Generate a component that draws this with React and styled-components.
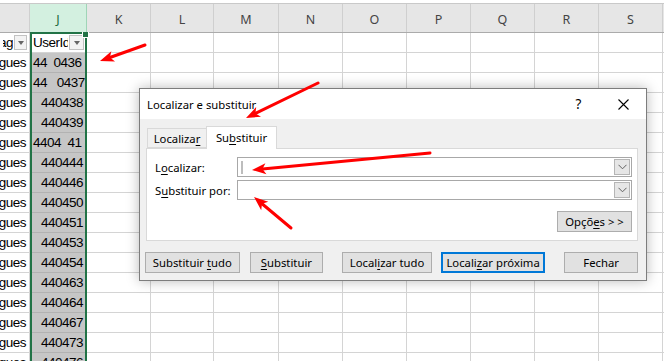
import React from 'react'
import styled, { createGlobalStyle } from 'styled-components'

const GlobalStyle = createGlobalStyle`
    html, body {
        margin: 0;
        padding: 0;
        background: #ffffff;
        overflow: hidden;
    }
`

const UI_FONT = `"Segoe UI", "Noto Sans", "Open Sans", sans-serif`
const CELL_FONT = `"Liberation Sans", Arial, sans-serif`

const columns = [
    { key: 'I', width: 30 },
    { key: 'J', width: 57 },
    { key: 'K', width: 64 },
    { key: 'L', width: 63 },
    { key: 'M', width: 65 },
    { key: 'N', width: 64 },
    { key: 'O', width: 64 },
    { key: 'P', width: 64 },
    { key: 'Q', width: 64 },
    { key: 'R', width: 64 },
    { key: 'S', width: 64 },
    { key: 'T', width: 64 },
]

const userIds = [
    { text: '44  0436', align: 'left' },
    { text: '44   0437', align: 'left' },
    { text: '440438' },
    { text: '440439' },
    { text: '4404  41', align: 'left' },
    { text: '440444' },
    { text: '440446' },
    { text: '440450' },
    { text: '440451' },
    { text: '440453' },
    { text: '440454' },
    { text: '440463' },
    { text: '440464' },
    { text: '440467' },
    { text: '440473' },
    { text: '440476' },
]

const Sheet = styled.div`
    position: relative;
    width: 664px;
    height: 361px;
    overflow: hidden;
    background: #ffffff;
`
const TopStrip = styled.div`
    height: 3px;
    background: #ffffff;
    border-bottom: 1px solid #c9c9c9;
`
const HeaderRow = styled.div`
    display: flex;
    height: 29px;
    box-sizing: border-box;
    background: #e6e6e6;
    border-bottom: 1px solid #ababab;
`
const ColHeader = styled.div`
    flex: 0 0 ${(p) => p.$width}px;
    box-sizing: border-box;
    display: flex;
    align-items: center;
    justify-content: center;
    padding-top: 3px;
    border-right: 1px solid ${(p) => (p.$selected ? '#9fd5b7' : '#cfcfcf')};
    background: ${(p) => (p.$selected ? '#d3f0e0' : 'transparent')};
    color: ${(p) => (p.$selected ? '#1e6b41' : '#444444')};
    font-family: ${UI_FONT};
    font-size: 12.5px;
`
const Row = styled.div`
    display: flex;
    height: 20px;
`
const Cell = styled.div`
    flex: 0 0 ${(p) => p.$width}px;
    box-sizing: border-box;
    display: flex;
    align-items: flex-end;
    justify-content: ${(p) => (p.$align === 'left' ? 'flex-start' : 'flex-end')};
    overflow: hidden;
    padding: 0 3px 3px 3px;
    white-space: pre;
    border-right: 1px solid ${(p) => (p.$shaded ? '#b8b8b8' : '#d4d4d4')};
    border-bottom: 1px solid ${(p) => (p.$shaded ? '#b2b2b2' : '#d4d4d4')};
    background: ${(p) => (p.$shaded ? '#c6c6c6' : '#ffffff')};
    color: #000000;
    font-family: ${CELL_FONT};
    font-size: 13.5px;
    letter-spacing: -0.5px;
    line-height: 13px;
`
const HeadCell = styled(Cell)`
    padding: 0 2px 2px 3px;
`
const HeadLabel = styled.span`
    flex: 1 1 auto;
    overflow: hidden;
    text-align: ${(p) => (p.$align === 'right' ? 'right' : 'left')};
    direction: ${(p) => (p.$align === 'right' ? 'rtl' : 'ltr')};
    padding-bottom: 1px;
`
const FilterButton = styled.span`
    flex: 0 0 auto;
    width: ${(p) => p.$width || 15}px;
    height: 15px;
    box-sizing: border-box;
    margin-left: 1px;
    border: 1px solid #c2c2c2;
    background: #f3f3f3;
    display: flex;
    align-items: center;
    justify-content: center;
`
const FilterCaret = styled.span`
    width: 0;
    height: 0;
    border-left: 3.5px solid transparent;
    border-right: 3.5px solid transparent;
    border-top: 4px solid #666666;
`
const Selection = styled.div`
    position: absolute;
    left: 30px;
    top: 32px;
    width: 57px;
    height: 340px;
    box-sizing: border-box;
    border: 2px solid #217346;
    pointer-events: none;
    z-index: 2;
`
const FillHandle = styled.div`
    position: absolute;
    right: -4px;
    top: -2px;
    width: 5px;
    height: 5px;
    background: #217346;
    border: 1px solid #ffffff;
    border-top: none;
`

/* ---- dialog ---- */
const Dialog = styled.div`
    position: absolute;
    left: 139px;
    top: 88px;
    width: 508px;
    height: 193px;
    box-sizing: border-box;
    border: 1px solid #7d7d7d;
    background: #f0f0f0;
    box-shadow: 0 0 12px rgba(0, 0, 0, 0.28);
    font-family: ${UI_FONT};
    font-size: 11.3px;
    color: #000000;
    z-index: 5;
    display: flex;
    flex-direction: column;
`
const TitleBar = styled.div`
    height: 30px;
    flex: 0 0 30px;
    background: #ffffff;
    display: flex;
    align-items: center;
    padding-left: 7px;
`
const Title = styled.span`
    flex: 1 1 auto;
`
const TitleIcon = styled.span`
    width: 45px;
    height: 30px;
    display: flex;
    align-items: center;
    justify-content: center;
    font-size: 13.5px;
`
const Body = styled.div`
    flex: 1 1 auto;
    padding: 7px 8px 0 6px;
    display: flex;
    flex-direction: column;
`
const TabBar = styled.div`
    display: flex;
    align-items: flex-end;
    height: 22px;
    padding-left: 1px;
`
const Tab = styled.div`
    box-sizing: border-box;
    height: ${(p) => (p.$active ? 23 : 20)}px;
    width: ${(p) => p.$width}px;
    margin-bottom: ${(p) => (p.$active ? -1 : 0)}px;
    line-height: ${(p) => (p.$active ? 21 : 19)}px;
    text-align: center;
    background: ${(p) => (p.$active ? '#ffffff' : '#f0f0f0')};
    border: 1px solid #d9d9d9;
    border-bottom: ${(p) => (p.$active ? 'none' : '1px solid #d9d9d9')};
    border-right: ${(p) => (p.$active ? '1px solid #d9d9d9' : 'none')};
    position: relative;
    z-index: ${(p) => (p.$active ? 1 : 0)};
`
const Panel = styled.div`
    height: 93px;
    box-sizing: border-box;
    background: #ffffff;
    border: 1px solid #d9d9d9;
    padding: 8px 5px 0 8px;
    display: flex;
    flex-direction: column;
`
const FieldGrid = styled.div`
    display: grid;
    grid-template-columns: 82px 1fr;
    row-gap: 3px;
    align-items: center;
`
const Label = styled.span`
    padding-top: 1px;
`
const Combo = styled.div`
    height: 20px;
    box-sizing: border-box;
    border: 1px solid #a8a8a8;
    background: #ffffff;
    display: flex;
    align-items: center;
`
const Caret = styled.span`
    width: 2px;
    height: 13px;
    margin-left: 3px;
    background: #bdbdbd;
`
const ComboSpacer = styled.span`
    flex: 1 1 auto;
`
const ComboButton = styled.span`
    width: 16px;
    height: 16px;
    box-sizing: border-box;
    margin-right: 1px;
    border: 1px solid #b5b5b5;
    background: #e6e6e6;
    display: flex;
    align-items: center;
    justify-content: center;
`
const OptionsRow = styled.div`
    display: flex;
    justify-content: flex-end;
    margin-top: 11px;
`
const Button = styled.button`
    display: block;
    box-sizing: border-box;
    width: ${(p) => p.$width}px;
    height: 21px;
    margin-left: ${(p) => p.$gap || 0}px;
    padding: 0;
    background: #e1e1e1;
    border: ${(p) => (p.$default ? '2px solid #0078d7' : '1px solid #adadad')};
    font-family: ${UI_FONT};
    font-size: 11.3px;
    line-height: ${(p) => (p.$default ? 17 : 19)}px;
    text-align: center;
    white-space: pre;
    color: #000000;
`
const ButtonRow = styled.div`
    display: flex;
    margin-top: 11px;
    margin-left: -1px;
`
const U = styled.span`
    text-decoration: underline;
    text-underline-offset: 2px;
`
const Overlay = styled.svg`
    position: absolute;
    left: 0;
    top: 0;
    pointer-events: none;
    z-index: 10;
`

const Arrow = ({ x1, y1, x2, y2 }) => {
    const dx = x2 - x1
    const dy = y2 - y1
    const len = Math.hypot(dx, dy)
    const ux = dx / len
    const uy = dy / len
    const nx = -uy
    const ny = ux
    const L = 14
    const W = 5.5
    const bx = x2 - ux * L
    const by = y2 - uy * L
    const mx = x2 - ux * L * 0.75
    const my = y2 - uy * L * 0.75
    const pts = [
        [x2, y2],
        [bx + nx * W, by + ny * W],
        [mx, my],
        [bx - nx * W, by - ny * W],
    ]
        .map((p) => p.join(','))
        .join(' ')
    return (
        <g>
            <line x1={x1} y1={y1} x2={mx} y2={my} stroke="#ff0000" strokeWidth="3" strokeLinecap="round" />
            <polygon points={pts} fill="#ff0000" />
        </g>
    )
}

const ChevronDown = () => (
    <svg width="9" height="6" viewBox="0 0 9 6">
        <path d="M0.5 0.8 L4.5 4.8 L8.5 0.8" fill="none" stroke="#606060" strokeWidth="1" />
    </svg>
)

const CloseIcon = () => (
    <svg width="11" height="11" viewBox="0 0 11 11">
        <path d="M0.5 0.5 L10.5 10.5 M10.5 0.5 L0.5 10.5" stroke="#000000" strokeWidth="1.1" />
    </svg>
)

const SheetGrid = () => (
    <>
        <TopStrip />
        <HeaderRow>
            {columns.map((c) => (
                <ColHeader key={c.key} $width={c.width} $selected={c.key === 'J'}>
                    {c.key === 'I' ? '' : c.key}
                </ColHeader>
            ))}
        </HeaderRow>
        <Row>
            {columns.map((c) => {
                if (c.key === 'I')
                    return (
                        <HeadCell key={c.key} $width={c.width} $align="left">
                            <HeadLabel $align="right">Linguag</HeadLabel>
                            <FilterButton $width={13}>
                                <FilterCaret />
                            </FilterButton>
                        </HeadCell>
                    )
                if (c.key === 'J')
                    return (
                        <HeadCell key={c.key} $width={c.width} $align="left">
                            <HeadLabel>UserId</HeadLabel>
                            <FilterButton>
                                <FilterCaret />
                            </FilterButton>
                        </HeadCell>
                    )
                return <Cell key={c.key} $width={c.width} />
            })}
        </Row>
        {userIds.map((v, i) => (
            <Row key={i}>
                {columns.map((c) => {
                    if (c.key === 'I')
                        return (
                            <Cell key={c.key} $width={c.width}>
                                Portugues
                            </Cell>
                        )
                    if (c.key === 'J')
                        return (
                            <Cell key={c.key} $width={c.width} $shaded $align={v.align}>
                                {v.text}
                            </Cell>
                        )
                    return <Cell key={c.key} $width={c.width} />
                })}
            </Row>
        ))}
    </>
)

const FindReplaceDialog = () => (
    <Dialog>
        <TitleBar>
            <Title>Localizar e substituir</Title>
            <TitleIcon>?</TitleIcon>
            <TitleIcon>
                <CloseIcon />
            </TitleIcon>
        </TitleBar>
        <Body>
            <TabBar>
                <Tab $width={59}>
                    Localiza<U>r</U>
                </Tab>
                <Tab $width={71} $active>
                    Su<U>b</U>stituir
                </Tab>
            </TabBar>
            <Panel>
                <FieldGrid>
                    <Label>
                        L<U>o</U>calizar:
                    </Label>
                    <Combo>
                        <Caret />
                        <ComboSpacer />
                        <ComboButton>
                            <ChevronDown />
                        </ComboButton>
                    </Combo>
                    <Label>
                        S<U>u</U>bstituir por:
                    </Label>
                    <Combo>
                        <ComboSpacer />
                        <ComboButton>
                            <ChevronDown />
                        </ComboButton>
                    </Combo>
                </FieldGrid>
                <OptionsRow>
                    <Button $width={75}>
                        Opçõ<U>e</U>s &gt; &gt;
                    </Button>
                </OptionsRow>
            </Panel>
            <ButtonRow>
                <Button $width={95}>
                    {'Substituir '}
                    <U>t</U>udo
                </Button>
                <Button $width={74} $gap={10}>
                    <U>S</U>ubstituir
                </Button>
                <Button $width={90} $gap={19}>
                    Local<U>i</U>zar tudo
                </Button>
                <Button $width={105} $gap={9} $default>
                    Locali<U>z</U>ar próxima
                </Button>
                <Button $width={74} $gap={19}>
                    Fechar
                </Button>
            </ButtonRow>
        </Body>
    </Dialog>
)

const App = () => (
    <Sheet>
        <GlobalStyle />
        <SheetGrid />
        <Selection>
            <FillHandle />
        </Selection>
        <FindReplaceDialog />
        <Overlay width="664" height="361" viewBox="0 0 664 361">
            <Arrow x1={145} y1={45} x2={100} y2={61} />
            <Arrow x1={318} y1={83} x2={246} y2={118} />
            <Arrow x1={430} y1={153} x2={252} y2={170} />
            <Arrow x1={291} y1={228} x2={254} y2={197} />
        </Overlay>
    </Sheet>
)

export default App
